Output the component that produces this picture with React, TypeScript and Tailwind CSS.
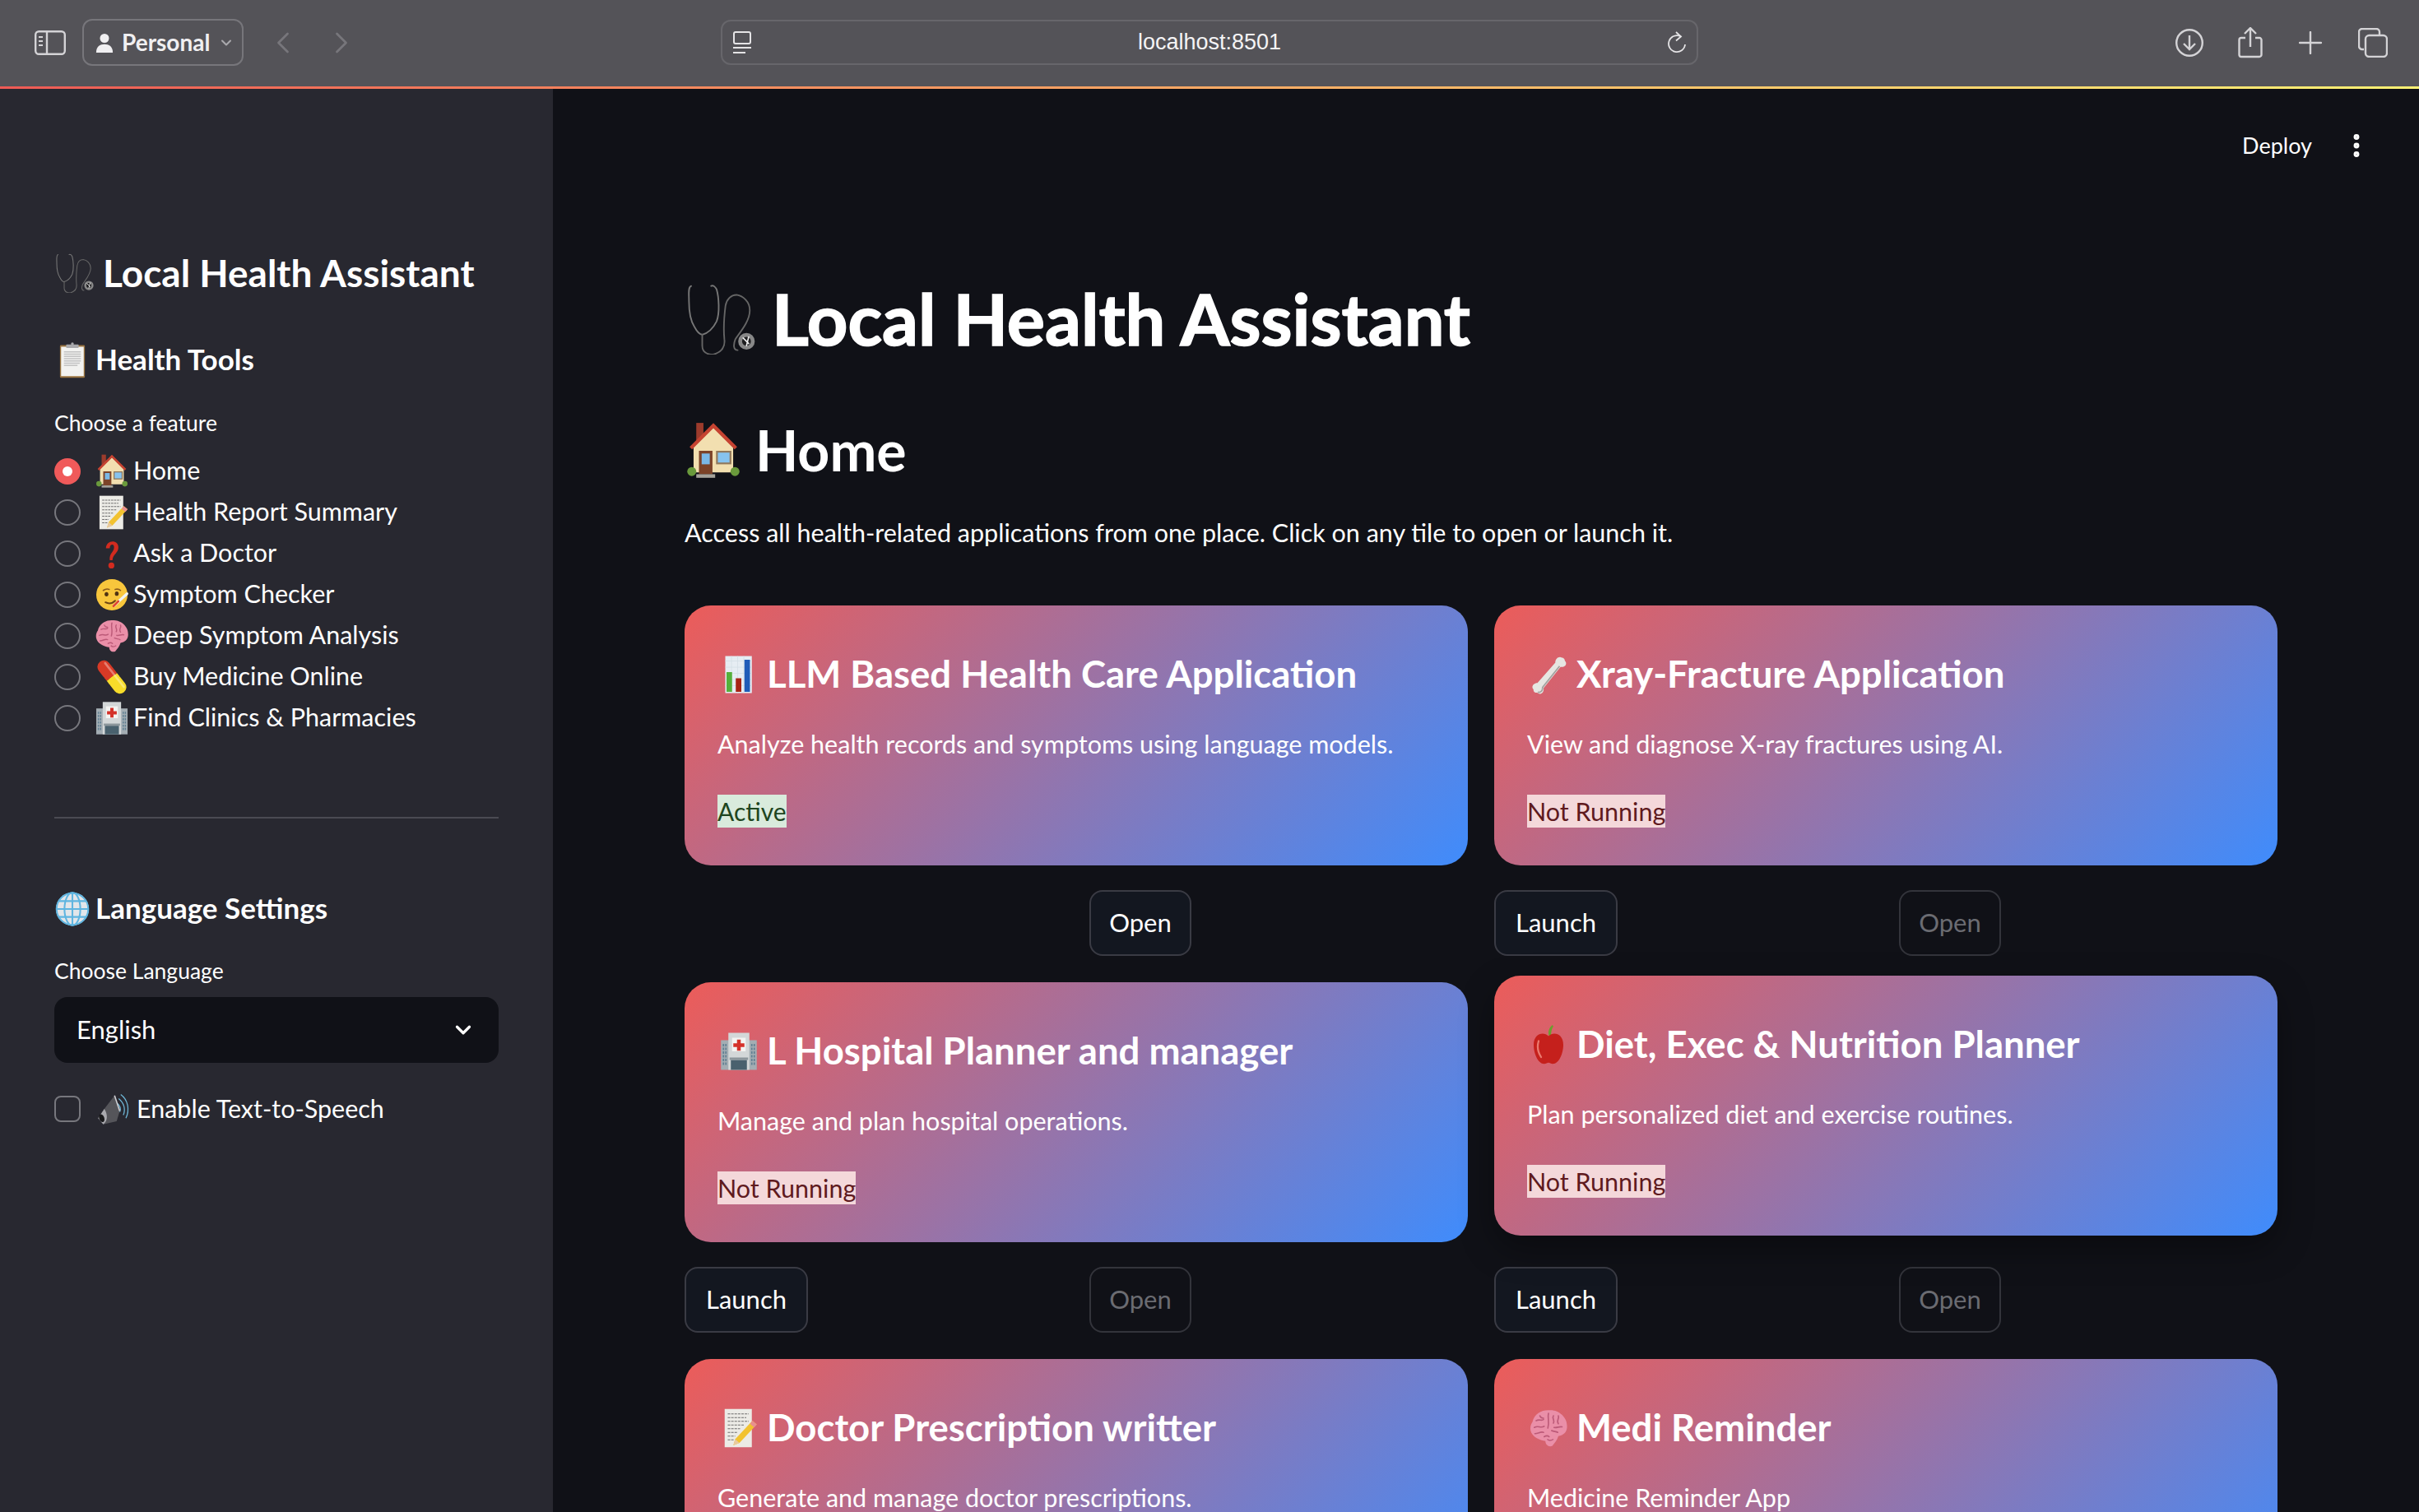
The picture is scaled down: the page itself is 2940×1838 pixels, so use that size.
import type { ReactNode } from "react";
import { ChevronDown, ChevronLeft, ChevronRight, MoreVertical } from "lucide-react";

type EmojiName =
  | "stethoscope" | "clipboard" | "house" | "memo" | "question" | "fever" | "brain"
  | "pill" | "hospital" | "globe" | "speaker" | "chart" | "bone" | "apple";

const emojis: Record<EmojiName, ReactNode> = {
  stethoscope: (
    <g fill="none" strokeLinecap="round">
      <path d="M6 2C3 3 4 9 4 16C4 24 5 33 9 39C11 43 14 46 16 46C20 45 25 42 29 34C32 26 31 12 29 5C28 3 26 1 24 2" stroke="#777" strokeWidth="1.4" />
      <path d="M16 46V56C16 62 20 64 26 64C33 62 37 58 36 50C35 40 36 28 37 20C38 14 42 10 47 10C53 11 59 16 59 24C59 34 50 44 46 50C44 55 44 60 48 60" stroke="#666" strokeWidth="1.4" />
      <circle cx="56" cy="52" r="7.5" fill="#888" />
      <circle cx="56" cy="52" r="4" fill="#1d1d1f" />
      <path d="M53 49l5 5M58 48l-2 8" stroke="#eee" strokeWidth="1.2" />
    </g>
  ),
  clipboard: (
    <g>
      <rect x="10" y="5" width="44" height="58" rx="2" fill="#9a7440" />
      <rect x="12" y="8" width="40" height="52" fill="#f2f2f0" />
      <path d="M17 17h30M17 21h30M17 25h30M17 29h30M17 33h30M17 37h28M17 41h24" stroke="#c2c2c2" strokeWidth="2" />
      <rect x="21" y="4" width="22" height="6" rx="1" fill="#a9a9ac" />
      <circle cx="32" cy="3" r="2.5" fill="#a9a9ac" />
    </g>
  ),
  house: (
    <g>
      <rect x="13" y="1" width="8" height="20" fill="#9c3b2c" />
      <path d="M10 56V27L32 6L54 27V56Z" fill="#f2dfb0" />
      <path d="M7 29L32 4L57 29" fill="none" stroke="#c64331" strokeWidth="4" />
      <rect x="16" y="32" width="15" height="26" fill="#7c4328" />
      <rect x="19" y="35" width="9" height="12" fill="#7ab8e6" />
      <rect x="35" y="32" width="17" height="15" fill="#91795c" />
      <rect x="37" y="34" width="13" height="11" fill="#86c3ef" />
      <circle cx="8" cy="55" r="5" fill="#6a9a3c" />
      <circle cx="56" cy="55" r="5" fill="#6a9a3c" />
      <rect x="13" y="58" width="21" height="4" fill="#a6a39b" />
    </g>
  ),
  memo: (
    <g>
      <rect x="9" y="1" width="44" height="62" fill="#ecebe6" />
      <path d="M14 9h34M14 15h30M14 21h34M14 27h26M14 33h20M14 39h16M14 45h12M14 51h10" stroke="#6d6d6d" strokeWidth="1.6" strokeDasharray="4 1.5" />
      <path d="M54 20L61 26L33 56L23 60L26 50Z" fill="#f2c230" />
      <path d="M54 20L61 26L57 31L50 25Z" fill="#e88f8f" />
      <path d="M23 60L26 50L33 56Z" fill="#e8c9a0" />
    </g>
  ),
  question: (
    <g>
      <path d="M21 22C21 6 44 5 44 20C44 31 34 32 33 44H28C27 30 36 29 36 20C36 13 28 14 28 22Z" fill="#d22b1f" />
      <circle cx="31" cy="54" r="5.5" fill="#d22b1f" />
    </g>
  ),
  fever: (
    <g>
      <circle cx="32" cy="32" r="29" fill="#f8c63c" />
      <path d="M16 24c4-3 8-3 11-2M38 22c4-1 8 0 10 2" stroke="#8a5a1c" strokeWidth="2.4" fill="none" strokeLinecap="round" />
      <ellipse cx="22" cy="31" rx="3.5" ry="4" fill="#4e3212" />
      <ellipse cx="41" cy="30" rx="3.5" ry="4" fill="#4e3212" />
      <path d="M20 46c6 3 13 2 18-3" stroke="#6e4515" strokeWidth="3" fill="none" strokeLinecap="round" />
      <path d="M36 52L60 30" stroke="#eef2f4" strokeWidth="5" strokeLinecap="round" />
      <path d="M35 53L44 44" stroke="#e0442f" strokeWidth="4" strokeLinecap="round" />
    </g>
  ),
  brain: (
    <g>
      <path d="M6 22C9 8 22 2 34 3C48 2 62 14 62 28C63 38 56 44 48 45C46 52 42 56 38 61C32 63 27 59 27 53C18 52 5 46 3 36C2 31 3 26 6 22Z" fill="#ea8fa8" />
      <path d="M12 20c5-3 9 1 12-2M9 31c7-4 10 2 16-2M10 41c6 0 9-4 14-2M32 8c-2 8 2 14-1 24M40 12c-3 4 3 8 0 12M48 12c2 5-4 8 0 13M54 30c-5-1-8 2-13 1M47 39c-3-2-6-1-10-3M18 12c1 3 3 4 6 4M25 46c3-2 6-2 8 0" stroke="#bc5a78" strokeWidth="2.2" fill="none" strokeLinecap="round" />
      <path d="M30 50c3 3 7 2 10 0" stroke="#bc5a78" strokeWidth="2" fill="none" />
    </g>
  ),
  pill: (
    <g transform="rotate(52 32 32)">
      <rect x="-4" y="20" width="38" height="24" rx="12" fill="#d83a26" />
      <rect x="30" y="20" width="38" height="24" rx="12" fill="#f7dc2a" />
      <rect x="24" y="20" width="8" height="24" fill="#d83a26" />
      <rect x="32" y="20" width="8" height="24" fill="#f7dc2a" />
      <rect x="2" y="24" width="60" height="4" rx="2" fill="#fff" opacity=".35" />
    </g>
  ),
  hospital: (
    <g>
      <rect x="3" y="14" width="58" height="48" fill="#a3adb3" />
      <rect x="15" y="2" width="34" height="60" fill="#d3d7d8" />
      <rect x="21" y="10" width="22" height="22" fill="#f4f4f2" />
      <path d="M29 13h6v6h6v6h-6v6h-6v-6h-6v-6h6Z" fill="#d4322a" />
      <path d="M7 20v36M11 20v36M53 20v36M57 20v36" stroke="#5f7f92" strokeWidth="2.2" strokeDasharray="4 2" />
      <rect x="19" y="46" width="26" height="16" fill="#49616e" />
      <rect x="17" y="42" width="30" height="4" fill="#8c969b" />
    </g>
  ),
  globe: (
    <g>
      <circle cx="32" cy="32" r="29" fill="#e2e6ea" />
      <circle cx="32" cy="32" r="28" fill="none" stroke="#5fb5e0" strokeWidth="3" />
      <path d="M4 32h56M8 18h48M8 46h48M32 3v58" stroke="#5fb5e0" strokeWidth="3" fill="none" />
      <ellipse cx="32" cy="32" rx="14" ry="29" stroke="#5fb5e0" strokeWidth="3" fill="none" />
    </g>
  ),
  speaker: (
    <g>
      <path d="M46 4C60 14 64 34 56 50" stroke="#6fb8d8" strokeWidth="2" fill="none" />
      <path d="M42 12C52 20 56 32 51 44" stroke="#6fb8d8" strokeWidth="2" fill="none" />
      <path d="M38 20C44 25 47 32 44 38" stroke="#6fb8d8" strokeWidth="2" fill="none" />
      <path d="M34 6L44 36L38 56L12 62L2 50L14 32Z" fill="#55555a" />
      <path d="M14 32L2 50L12 62C21 56 21 42 14 32Z" fill="#a9a9ae" />
      <ellipse cx="9" cy="50" rx="5" ry="8" fill="#18181a" transform="rotate(-20 9 50)" />
      <path d="M34 6L44 36" stroke="#d0d0d4" strokeWidth="2.5" />
    </g>
  ),
  chart: (
    <g>
      <rect x="10" y="2" width="43" height="60" fill="#e6edf3" />
      <path d="M10 10h43M10 20h43M10 30h43M10 40h43M10 50h43M20 2v60M30 2v60M40 2v60" stroke="#d3dde6" strokeWidth="1" />
      <rect x="12" y="28" width="9" height="32" fill="#55b03b" />
      <rect x="27" y="38" width="9" height="22" fill="#a82414" />
      <rect x="41" y="8" width="9" height="52" fill="#1f5cb8" />
    </g>
  ),
  bone: (
    <g transform="rotate(40 32 32)">
      <path d="M28 10C24 6 25 -2 31 -3C33 -5 37 -4 38 -2C44 -2 46 6 39 10L40 54C46 59 43 67 37 66C35 69 30 69 29 66C23 66 22 58 27 54Z" fill="#e6e6e2" />
      <path d="M37 10L38 54C42 58 41 63 37 65" stroke="#a3a3a0" strokeWidth="2.4" fill="none" />
    </g>
  ),
  apple: (
    <g>
      <path d="M33 18C30 10 34 4 38 0L40 2C37 6 36 12 36 18Z" fill="#6c9e2e" />
      <path d="M32 18C24 10 8 14 8 32C8 46 15 63 25 63C28 63 30 61 32 61C34 61 36 63 39 63C49 63 56 46 56 32C56 14 40 10 32 18Z" fill="#c5201c" />
      <path d="M16 26C13 36 16 46 20 52" stroke="#ea7a6f" strokeWidth="3" fill="none" strokeLinecap="round" />
    </g>
  ),
};

function Emoji({ name, className }: { name: EmojiName; className: string }) {
  return (
    <svg viewBox="0 0 64 64" className={`shrink-0 ${className}`}>
      {emojis[name]}
    </svg>
  );
}

function BrowserBar() {
  return (
    <header className="flex h-[105px] items-center bg-[#545358] pb-[2px] text-[#d4d3d6]">
      <svg viewBox="0 0 38 30" className="ml-[42px] h-[30px] w-[38px]" fill="none" stroke="currentColor" strokeWidth="2.4">
        <rect x="1.2" y="1.2" width="35.6" height="27.6" rx="4" />
        <path d="M15 1v28" />
        <path d="M5 8h5M5 13h5M5 18h5" strokeWidth="2" />
      </svg>
      <div className="ml-[20px] flex h-[57px] w-[196px] items-center rounded-[12px] border-2 border-[#77767b] pl-[14px]">
        <svg viewBox="0 0 24 26" className="h-[26px] w-[22px]" fill="#f0eff1">
          <circle cx="12" cy="7" r="6" />
          <path d="M1 26c0-8 5-11 11-11s11 3 11 11Z" />
        </svg>
        <span className="ml-[10px] pb-[2px] text-[28px] font-bold text-[#f0eff1]">Personal</span>
        <ChevronDown className="ml-[10px] h-[20px] w-[20px] text-[#aaa9ad]" strokeWidth={2.5} />
      </div>
      <ChevronLeft className="ml-[26px] h-[44px] w-[44px] text-[#77767b]" strokeWidth={1.5} />
      <ChevronRight className="ml-[27px] h-[44px] w-[44px] text-[#77767b]" strokeWidth={1.5} />
      <div className="ml-[439px] flex h-[55px] w-[1188px] items-center justify-between rounded-[12px] border-2 border-[#67666b] px-[12px] font-['Liberation_Sans',sans-serif]">
        <svg viewBox="0 0 24 28" className="h-[28px] w-[24px]" fill="none" stroke="#e5e4e6" strokeWidth="2">
          <rect x="2" y="1" width="20" height="14" rx="2" />
          <path d="M1 20h22M1 26h15" />
        </svg>
        <span className="text-[27px] text-[#f4f4f5]">localhost:8501</span>
        <svg viewBox="0 0 24 28" className="h-[28px] w-[24px]" fill="none" stroke="#e5e4e6" strokeWidth="1.8">
          <path d="M17 6.5A10 10 0 1 0 22 16" />
          <path d="M11 1l6 5.5-6 5" />
        </svg>
      </div>
      <svg viewBox="0 0 36 36" className="ml-[579px] h-[36px] w-[36px]" fill="none" stroke="currentColor" strokeWidth="2.4">
        <circle cx="18" cy="18" r="15.8" />
        <path d="M18 9v17M11 19l7 7 7-7" />
      </svg>
      <svg viewBox="0 0 30 38" className="ml-[41px] h-[38px] w-[30px]" fill="none" stroke="currentColor" strokeWidth="2.4">
        <path d="M9 13H4a2.5 2.5 0 0 0-2.5 2.5v18A2.5 2.5 0 0 0 4 36h22a2.5 2.5 0 0 0 2.5-2.5v-18A2.5 2.5 0 0 0 26 13h-5" />
        <path d="M15 24V2M8 8l7-7 7 7" />
      </svg>
      <svg viewBox="0 0 28 28" className="ml-[44px] h-[28px] w-[28px]" fill="none" stroke="currentColor" strokeWidth="2.4" strokeLinecap="round">
        <path d="M14 1v26M1 14h26" />
      </svg>
      <svg viewBox="0 0 36 36" className="ml-[44px] h-[36px] w-[36px]" fill="none" stroke="currentColor" strokeWidth="2.4">
        <path d="M7 26H5a4 4 0 0 1-4-4V5a4 4 0 0 1 4-4h17a4 4 0 0 1 4 4v4" />
        <rect x="9" y="9" width="26" height="26" rx="4.5" />
      </svg>
    </header>
  );
}

const features: { emoji: EmojiName; label: string }[] = [
  { emoji: "house", label: "Home" },
  { emoji: "memo", label: "Health Report Summary" },
  { emoji: "question", label: "Ask a Doctor" },
  { emoji: "fever", label: "Symptom Checker" },
  { emoji: "brain", label: "Deep Symptom Analysis" },
  { emoji: "pill", label: "Buy Medicine Online" },
  { emoji: "hospital", label: "Find Clinics & Pharmacies" },
];

function Sidebar() {
  return (
    <aside className="w-[672px] shrink-0 bg-[#282830] pl-[66px] pr-[66px] pt-[196px] text-white">
      <div className="flex h-[56px] items-center">
        <Emoji name="stethoscope" className="h-[48px] w-[48px]" />
        <h2 className="ml-[11px] pb-[2px] text-[46px] font-bold whitespace-nowrap">Local Health Assistant</h2>
      </div>
      <div className="mt-[54px] flex h-[48px] items-center">
        <Emoji name="clipboard" className="h-[44px] w-[44px]" />
        <h3 className="ml-[6px] pb-[3px] text-[35px] font-bold">Health Tools</h3>
      </div>
      <p className="mt-[34px] text-[26.5px] leading-[36px]">Choose a feature</p>
      <ul className="mt-[16px]">
        {features.map((f, i) => (
          <li key={f.label} className="flex h-[50px] items-center">
            {i === 0 ? (
              <span className="flex h-[32px] w-[32px] items-center justify-center rounded-full bg-[#f05a5a]">
                <span className="h-[12px] w-[12px] rounded-full bg-white" />
              </span>
            ) : (
              <span className="h-[32px] w-[32px] rounded-full border-2 border-[#77777d]" />
            )}
            <Emoji name={f.emoji} className="ml-[17px] h-[42px] w-[42px]" />
            <span className="ml-[5px] pb-[2px] text-[30.5px] whitespace-nowrap">{f.label}</span>
          </li>
        ))}
      </ul>
      <hr className="mt-[95px] h-[2px] border-0 bg-[#4a4a52]" />
      <div className="mt-[86px] flex h-[48px] items-center">
        <Emoji name="globe" className="h-[44px] w-[44px]" />
        <h3 className="ml-[6px] pb-[3px] text-[35px] font-bold">Language Settings</h3>
      </div>
      <p className="mt-[33px] text-[26.5px] leading-[36px]">Choose Language</p>
      <div className="mt-[14px] flex h-[80px] items-center justify-between rounded-[16px] bg-[#101117] pl-[27px] pr-[28px]">
        <span className="pb-[1px] text-[31px]">English</span>
        <ChevronDown className="h-[30px] w-[30px]" strokeWidth={2.6} />
      </div>
      <div className="mt-[36px] flex h-[40px] items-center">
        <span className="h-[32px] w-[32px] rounded-[8px] border-2 border-[#77777d]" />
        <Emoji name="speaker" className="ml-[20px] h-[40px] w-[40px]" />
        <span className="ml-[8px] pb-[1px] text-[30.5px]">Enable Text-to-Speech</span>
      </div>
    </aside>
  );
}

type Tool = {
  emoji: EmojiName;
  title: string;
  desc: string;
  active?: boolean;
  hovered?: boolean;
};

const tools: Tool[] = [
  { emoji: "chart", title: "LLM Based Health Care Application", desc: "Analyze health records and symptoms using language models.", active: true },
  { emoji: "bone", title: "Xray-Fracture Application", desc: "View and diagnose X-ray fractures using AI." },
  { emoji: "hospital", title: "L Hospital Planner and manager", desc: "Manage and plan hospital operations." },
  { emoji: "apple", title: "Diet, Exec & Nutrition Planner", desc: "Plan personalized diet and exercise routines.", hovered: true },
  { emoji: "memo", title: "Doctor Prescription writter", desc: "Generate and manage doctor prescriptions." },
  { emoji: "brain", title: "Medi Reminder", desc: "Medicine Reminder App" },
];

function ToolTile({ tool }: { tool: Tool }) {
  return (
    <div>
      <div
        className={`h-[316px] rounded-[32px] bg-linear-[135deg,#ec5c59,#3f8cfc] px-[40px] pt-[56px] text-white ${
          tool.hovered ? "-translate-y-2 shadow-[0_16px_40px_rgba(0,0,0,0.35)]" : ""
        }`}
      >
        <div className="flex h-[56px] items-center">
          <Emoji name={tool.emoji} className="ml-[2px] h-[48px] w-[48px]" />
          <h3 className="ml-[10px] pb-[2px] text-[45.5px] font-bold whitespace-nowrap">{tool.title}</h3>
        </div>
        <p className="mt-[34px] text-[30.5px] leading-[44px]">{tool.desc}</p>
        {tool.active ? (
          <p className="mt-[40px] w-fit bg-[#d9ebdc] text-[30px] leading-[40px] text-[#1e4620]">Active</p>
        ) : (
          <p className="mt-[40px] w-fit bg-[#f4d8da] text-[30.5px] leading-[40px] text-[#5f1a1e]">Not Running</p>
        )}
      </div>
      <div className="mt-[30px] grid grid-cols-2 gap-x-8">
        <div>
          {!tool.active && (
            <button className="h-[80px] w-[150px] rounded-[16px] border-2 border-[#3a3b44] bg-[#131720] pb-[2px] text-[31px] text-white">
              Launch
            </button>
          )}
        </div>
        <div>
          <button
            className={`h-[80px] w-[124px] rounded-[16px] border-2 pb-[2px] text-[31px] ${
              tool.active ? "border-[#3a3b44] bg-[#131720] text-white" : "border-[#33343b] text-[#6b6c72]"
            }`}
          >
            Open
          </button>
        </div>
      </div>
    </div>
  );
}

export default function App() {
  return (
    <div className="flex h-[1838px] w-[2940px] flex-col overflow-hidden bg-[#101117] font-['Lato','Noto_Sans',sans-serif]">
      <BrowserBar />
      <div className="h-[3px] shrink-0 bg-linear-to-r from-[#ee5a55] to-[#fdf174]" />
      <div className="flex min-h-0 flex-1">
        <Sidebar />
        <main className="min-w-0 flex-1 pl-[160px] pr-[172px] text-white">
          <div className="mr-[-114px] mt-[44px] flex h-[50px] items-center justify-end gap-[36px]">
            <span className="text-[27px]">Deploy</span>
            <MoreVertical className="h-[36px] w-[36px]" strokeWidth={2.6} />
          </div>
          <div className="mt-[134px] flex h-[104px] items-center">
            <Emoji name="stethoscope" className="h-[86px] w-[86px]" />
            <h1 className="ml-[20px] pb-[3px] text-[86.5px] font-bold whitespace-nowrap [-webkit-text-stroke:1.5px_#fff]">Local Health Assistant</h1>
          </div>
          <div className="mt-[64px] flex h-[88px] items-center">
            <Emoji name="house" className="h-[70px] w-[70px]" />
            <h2 className="ml-[16px] pb-[3px] text-[68px] font-bold">Home</h2>
          </div>
          <p className="mt-[31px] text-[30.5px] leading-[48px]">
            Access all health-related applications from one place. Click on any tile to open or launch it.
          </p>
          <div className="mt-[65px] grid grid-cols-2 gap-x-8 gap-y-8">
            {tools.map((t) => (
              <ToolTile key={t.title} tool={t} />
            ))}
          </div>
        </main>
      </div>
    </div>
  );
}
